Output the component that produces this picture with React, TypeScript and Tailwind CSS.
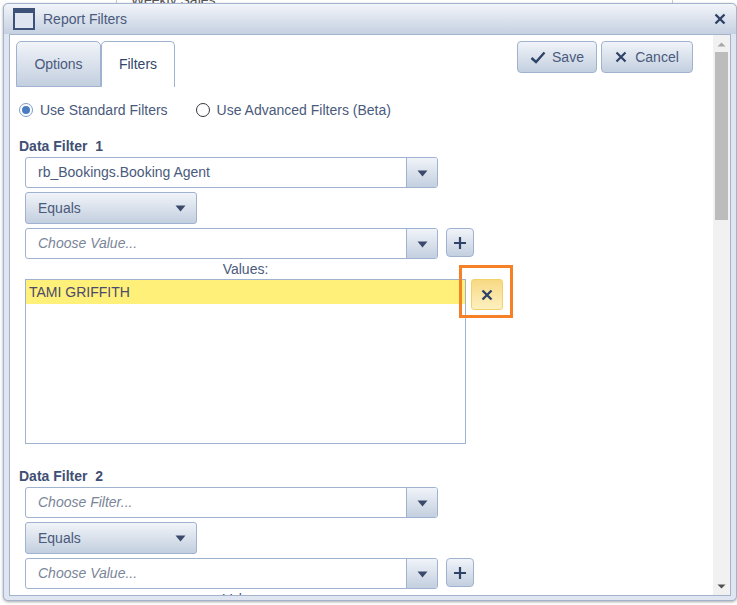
const btn = "bg-gradient-to-b from-[#f1f4f9] to-[#c3cfdf] border border-[#9fb2cf]";

function Caret({ className = "" }: { className?: string }) {
  return (
    <svg width="11" height="7" viewBox="0 0 11 7" className={className}>
      <path d="M0.5 0.5H10.5L5.5 6.5Z" fill="#3b4a6b" />
    </svg>
  );
}

function Cross({ size = 12, stroke = 2.4 }: { size?: number; stroke?: number }) {
  return (
    <svg width={size} height={size} viewBox="0 0 12 12">
      <path d="M1.5 1.5L10.5 10.5M10.5 1.5L1.5 10.5" stroke="#2f4268" strokeWidth={stroke} fill="none" />
    </svg>
  );
}

function Combo({ text, placeholder }: { text: string; placeholder?: boolean }) {
  return (
    <div className="flex w-[413px] h-[31px] rounded-[3px] border border-[#9fb2cf] bg-white overflow-hidden">
      <div className={`flex-1 pl-[12px] leading-[29px] text-[14px] ${placeholder ? "italic text-[#7a8598]" : "text-[#4a5a7c]"}`}>
        {text}
      </div>
      <div className={`w-[31px] flex items-center justify-center border-l border-[#9fb2cf] ${"bg-gradient-to-b from-[#f1f4f9] to-[#c3cfdf]"}`}>
        <Caret className="mt-[2px]" />
      </div>
    </div>
  );
}

function EqualsSelect() {
  return (
    <div className={`flex items-center justify-between w-[172px] h-[32px] rounded-[3px] pl-[12px] pr-[10px] text-[14px] text-[#4a5a7c] ${btn}`}>
      <span>Equals</span>
      <Caret />
    </div>
  );
}

function PlusButton() {
  return (
    <div className={`flex items-center justify-center w-[28px] h-[29px] rounded-[4px] ${btn}`}>
      <svg width="14" height="14" viewBox="0 0 14 14">
        <path d="M7 1V13M1 7H13" stroke="#2f4268" strokeWidth="2.2" fill="none" />
      </svg>
    </div>
  );
}

function Radio({ checked, label }: { checked?: boolean; label: string }) {
  return (
    <div className="flex items-center gap-[7px]">
      <span className={`flex items-center justify-center w-[14px] h-[14px] rounded-full border bg-white ${checked ? "border-[#7e9cc8]" : "border-[#33363d]"}`}>
        {checked && <span className="w-[8px] h-[8px] rounded-full bg-[#4a7cc0]" />}
      </span>
      <span>{label}</span>
    </div>
  );
}

export default function App() {
  return (
    <div className="relative w-[737px] h-[605px] overflow-hidden bg-white font-['Liberation_Sans',Arial,sans-serif]">
      {/* page behind the dialog */}
      <div className="absolute left-[131px] top-[-10px] text-[14px] text-[#555]">Weekly Sales</div>
      <div className="absolute left-[116px] top-0 w-px h-[4px] bg-[#ccc]" />
      <div className="absolute left-[672px] top-0 w-px h-[4px] bg-[#ccc]" />

      {/* dialog */}
      <div className="absolute left-[3px] top-[3px] w-[734px] h-[598px] flex flex-col rounded-[5px] border border-[#a3b3cc] bg-[#dfe6f1] shadow-[0_1px_3px_rgba(0,0,0,0.35)]">
        <div className="flex items-center h-[30px] shrink-0 pl-[9px] pr-[10px] rounded-t-[5px] bg-gradient-to-b from-[#f2f5fa] to-[#c5d0e1]">
          <div className="w-[22px] h-[22px] border-[2px] border-[#3d5279] border-t-[5px] bg-[#dfe6f1]" />
          <span className="ml-[8px] text-[14px] text-[#4a5a7c]">Report Filters</span>
          <span className="ml-auto"><Cross size={12} stroke={2.4} /></span>
        </div>

        <div className="flex flex-1 min-h-0 mx-[5px] mb-[4px] border border-[#a3b3cc] bg-white">
          <div className="relative flex-1 min-w-0 overflow-hidden text-[14px] text-[#4a5a7c]">
            {/* tabs and actions */}
            <div className="flex items-start pl-[6px] pr-[20px] pt-[6px]">
              <div className={`w-[85px] h-[46px] rounded-t-[5px] text-center leading-[44px] ${btn}`}>Options</div>
              <div className="w-[74px] h-[46px] rounded-t-[5px] border border-b-0 border-[#9fb2cf] bg-white text-center leading-[44px] text-[#33466b]">Filters</div>
              <div className={`ml-auto flex items-center justify-center gap-[6px] w-[80px] h-[32px] rounded-[4px] ${btn}`}>
                <svg width="16" height="13" viewBox="0 0 16 13">
                  <path d="M1.5 7L6 11L14.5 1.5" stroke="#2f4268" strokeWidth="2.4" fill="none" />
                </svg>
                <span>Save</span>
              </div>
              <div className={`ml-[4px] flex items-center justify-center gap-[8px] w-[92px] h-[32px] rounded-[4px] ${btn}`}>
                <Cross size={12} stroke={2.2} />
                <span>Cancel</span>
              </div>
            </div>

            {/* filter mode */}
            <div className="flex items-center gap-[28px] h-[16px] pl-[9px] mt-[15px]">
              <Radio checked label="Use Standard Filters" />
              <Radio label="Use Advanced Filters (Beta)" />
            </div>

            <div className="pl-[9px] mt-[19px] leading-[18px] font-bold text-[#3f5074]">Data Filter&nbsp; 1</div>
            <div className="flex flex-col gap-[4px] pl-[15px] mt-[2px]">
              <Combo text="rb_Bookings.Booking Agent" />
              <EqualsSelect />
              <div className="flex items-start gap-[8px]">
                <Combo text="Choose Value..." placeholder />
                <PlusButton />
              </div>
            </div>
            <div className="w-[441px] ml-[15px] text-center leading-[20px]">Values:</div>
            <div className="flex items-start gap-[5px] pl-[15px] h-[166px]">
              <div className="w-[441px] h-[165px] border border-[#9fb2cf] bg-white">
                <div className="h-[24px] leading-[24px] pl-[3px] bg-[#fff07a] text-[#4a4a6a]">TAMI GRIFFITH</div>
              </div>
              <div className="flex items-center justify-center w-[32px] h-[31px] rounded-[3px] border border-[#f2d26b] bg-gradient-to-b from-[#f7d982] to-[#fdf0c0]">
                <Cross size={12} stroke={2.4} />
              </div>
            </div>

            <div className="pl-[9px] mt-[22px] leading-[18px] font-bold text-[#3f5074]">Data Filter&nbsp; 2</div>
            <div className="flex flex-col gap-[4px] pl-[15px] mt-[2px]">
              <Combo text="Choose Filter..." placeholder />
              <EqualsSelect />
              <div className="flex items-start gap-[8px]">
                <Combo text="Choose Value..." placeholder />
                <PlusButton />
              </div>
            </div>
            <div className="w-[441px] ml-[15px] text-center leading-[20px]">Values:</div>

            {/* highlight drawn over the remove button */}
            <div className="absolute left-[449px] top-[230px] w-[54px] h-[53px] border-[3px] border-[#f58025]" />
          </div>

          {/* scrollbar */}
          <div className="flex flex-col items-center w-[17px] shrink-0 bg-[#f1f1f1]">
            <svg width="9" height="5" viewBox="0 0 9 5" className="mt-[7px]">
              <path d="M0.5 4.5H8.5L4.5 0.5Z" fill="#a8a8a8" />
            </svg>
            <div className="w-[13px] h-[168px] mt-[5px] bg-[#bcbcbc]" />
            <svg width="9" height="5" viewBox="0 0 9 5" className="mt-auto mb-[6px]">
              <path d="M0.5 0.5H8.5L4.5 4.5Z" fill="#505050" />
            </svg>
          </div>
        </div>
      </div>
    </div>
  );
}
